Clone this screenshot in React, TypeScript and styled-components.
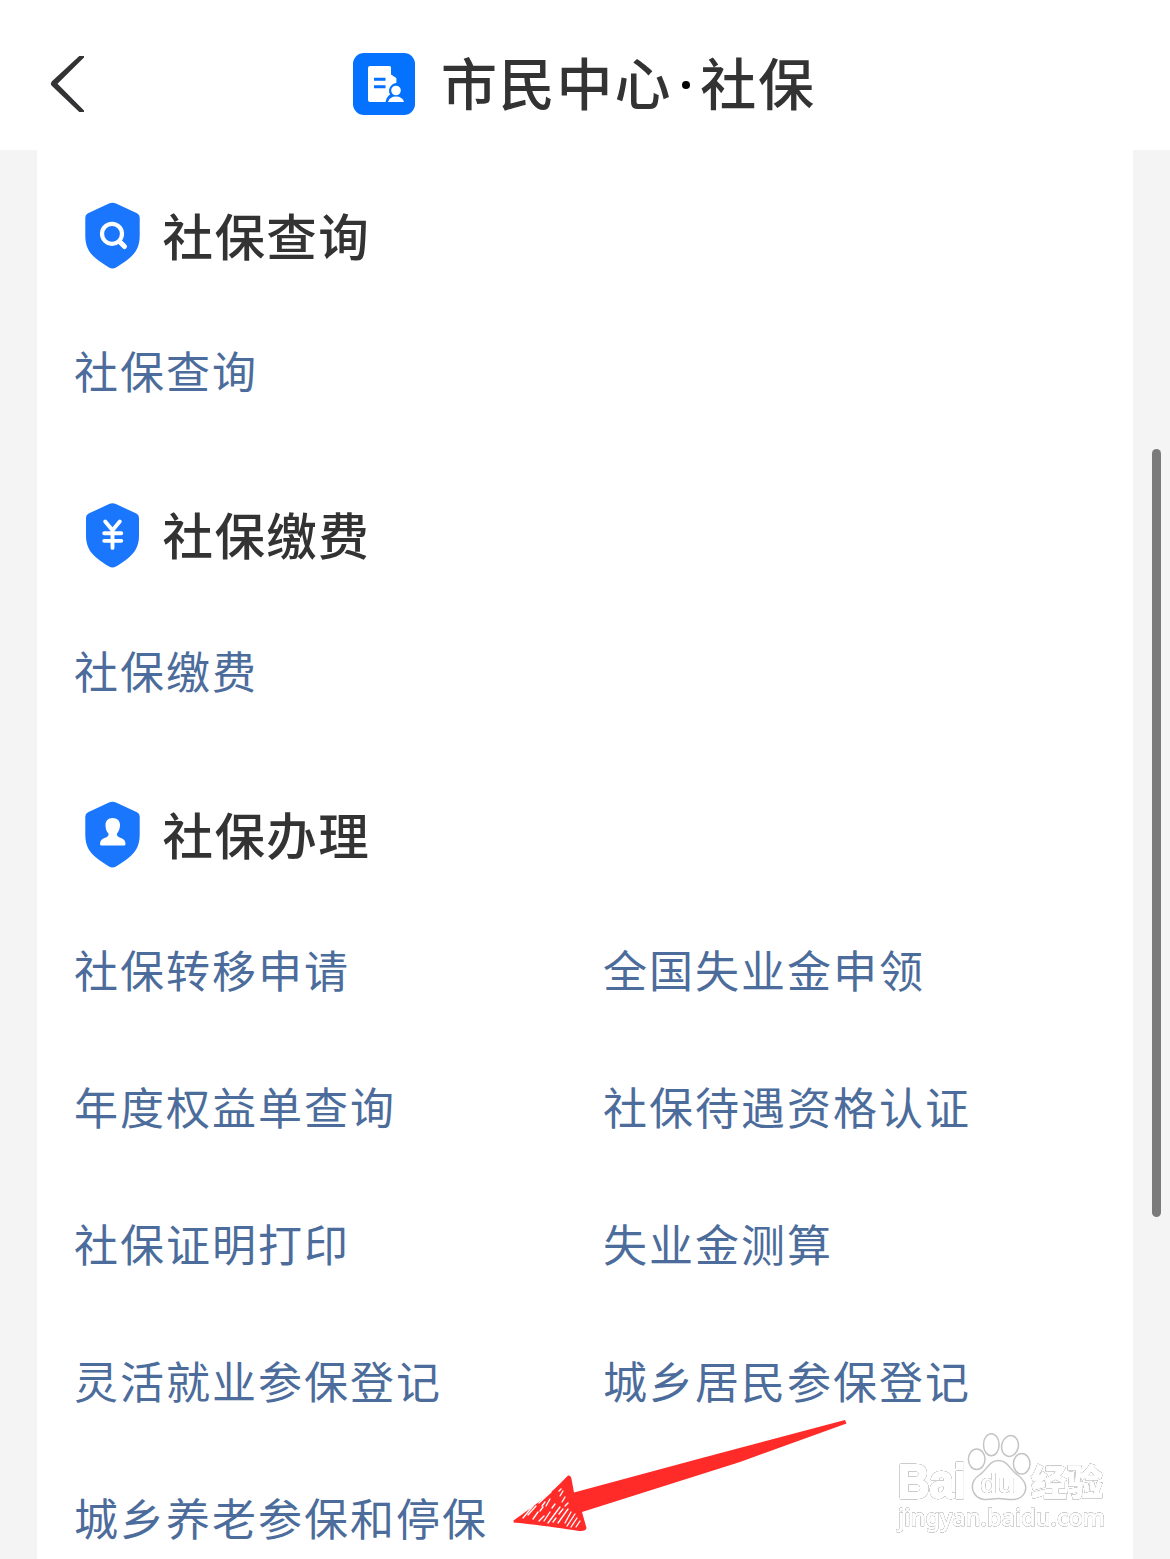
import React from "react";
import styled, { createGlobalStyle } from "styled-components";

const Global = createGlobalStyle`
  * { box-sizing: border-box; }
  body {
    margin: 0;
    background: #fff;
    font-family: "Noto Sans CJK SC", "Noto Sans", sans-serif;
  }
`;

const Page = styled.div`
  position: relative;
  display: flex;
  flex-direction: column;
  width: 1170px;
  height: 1559px;
  overflow: hidden;
  background: #f4f4f4;
`;

const Header = styled.header`
  display: grid;
  grid-template-columns: 353px 1fr;
  align-items: center;
  height: 150px;
  flex: none;
  padding-bottom: 16px;
  background: #fff;
`;

const BackButton = styled.button`
  display: flex;
  width: 100px;
  height: 60px;
  margin-top: 34px;
  padding: 0 0 0 50px;
  align-items: center;
  border: 0;
  background: none;

  svg { flex: none; }
`;

const Brand = styled.div`
  display: flex;
  align-items: center;
  height: 62px;
  margin-top: 34px;
  gap: 26px;
`;

const Title = styled.h1`
  display: flex;
  margin: 0;
  padding-bottom: 6px;
  font-size: 56px;
  font-weight: 500;
  line-height: 62px;
  letter-spacing: 1.8px;
  color: #333;
`;

const Dot = styled.span`
  display: flex;
  width: 28px;
  align-items: center;
  justify-content: center;
  padding: 8px 0 0 0;

  &::before {
    content: "";
    width: 8px;
    height: 8px;
    border-radius: 50%;
    background: #000;
  }
`;

const Card = styled.main`
  flex: 1;
  min-height: 0;
  margin: 0 37px;
  padding: 18px 0 0 37px;
  background: #fff;
`;

const Section = styled.section`
  display: flex;
  flex-direction: column;
  height: 299.5px;
`;

const Heading = styled.h2`
  display: flex;
  flex: none;
  align-items: center;
  height: 136px;
  margin: 0;
  padding-left: 10px;
  gap: 21.5px;
  font-size: 50.5px;
  font-weight: 500;
  letter-spacing: 1.4px;
  line-height: 60px;
  color: #333;

  svg { flex: none; }
`;

const HeadingText = styled.span`
  padding-bottom: 5px;
`;

const Links = styled.div`
  display: grid;
  flex: none;
  grid-template-columns: 529px 1fr;
  grid-auto-rows: 137.1px;
`;

const Link = styled.a`
  display: flex;
  align-items: center;
  padding-bottom: 5px;
  font-size: 44px;
  letter-spacing: 2px;
  line-height: 60px;
  white-space: nowrap;
  color: #4c6c9b;
`;

const ScrollThumb = styled.div`
  position: absolute;
  left: 1152px;
  top: 449px;
  width: 9px;
  height: 768px;
  border-radius: 5px;
  background: #7b7b7b;
`;

const ArrowMark = styled.svg`
  position: absolute;
  left: 500px;
  top: 1400px;
`;

const Watermark = styled.svg`
  position: absolute;
  left: 870px;
  top: 1410px;
`;

const Outlined = styled.g<{ $weight: number }>`
  fill: #fff;
  stroke: #fff;
  stroke-width: ${(p) => p.$weight}px;
  stroke-linejoin: round;
  filter: drop-shadow(0 0 0.6px #888) drop-shadow(0 0 0.6px #999);
`;

type Kind = "search" | "yen" | "person";

const Shield = ({ kind }: { kind: Kind }) => (
  <svg width="57" height="68" viewBox={kind === "yen" ? "-0.6 -0.6 58.2 69.8" : "0 0 57 68"}>
    <path
      fill="#1976fd"
      d="M25 1.500Q28.500 0 32 1.500L53 11.300Q55.700 12.800 55.700 15.500V34C55.700 44 52 51 45 56.500C41 59.800 36 63.200 32 65.500Q28.500 67.700 25 65.500C21 63.200 16 59.800 12 56.500C5 51 1.300 44 1.300 34V15.500Q1.300 12.800 4 11.300Z"
    />
    {kind === "search" && (
      <g fill="none" stroke="#fff" strokeWidth="4.200" strokeLinecap="round">
        <circle cx="28" cy="31.800" r="10" />
        <path d="M35.500 39.500L40.500 44.500" strokeWidth="5" />
      </g>
    )}
    {kind === "yen" && (
      <path
        d="M21 19.500L28.500 28.500L36 19.500M28.500 28.500V46.500M20 31.500H37.500M20 39.300H37.500"
        fill="none"
        stroke="#fff"
        strokeWidth="4"
        strokeLinecap="round"
        strokeLinejoin="round"
      />
    )}
    {kind === "person" && (
      <path
        fill="#fff"
        d="M28.500 17C33.500 17 36 20 36 24C36 28 34.500 30.500 33 32.500C32.500 35 34 36 37 37C40 38 41.500 40 41.500 43Q41.500 44.500 40 44.500H17.500Q16 44.500 16 43C16 40 17.500 38 20.500 37C23.500 36 25 35 24.500 32.500C22.500 30.500 21.500 28 21.500 24C21.500 20 24 17 28.500 17Z"
      />
    )}
  </svg>
);

const sections: { title: string; kind: Kind; links: string[] }[] = [
  { title: "社保查询", kind: "search", links: ["社保查询"] },
  { title: "社保缴费", kind: "yen", links: ["社保缴费"] },
  {
    title: "社保办理",
    kind: "person",
    links: [
      "社保转移申请",
      "全国失业金申领",
      "年度权益单查询",
      "社保待遇资格认证",
      "社保证明打印",
      "失业金测算",
      "灵活就业参保登记",
      "城乡居民参保登记",
      "城乡养老参保和停保",
    ],
  },
];

const App = () => (
  <>
    <Global />
    <Page>
      <Header>
        <BackButton aria-label="返回">
          <svg width="36" height="58" viewBox="0 0 36 58">
            <path d="M29.300 1H34V2.500L7.500 28.700L34 55.500V57H29.300L1.700 30.700Q0 28.700 1.700 26.600Z" fill="#333335" />
          </svg>
        </BackButton>
        <Brand>
          <svg width="62" height="62" viewBox="0 0 62 62">
            <rect width="62" height="62" rx="11" fill="#0571ff" />
            <path d="M17 13H36.500Q38 13 38 14.500V21.500L43.300 25Q43.700 27 43.300 30C37 31 34.500 37 37 41.500C34.500 43 33 46 32.500 49H17Q15 49 15 47V15Q15 13 17 13Z" fill="#fff" />
            <path d="M21 26.300H32.500M21 33.700H32.500" stroke="#0571ff" strokeWidth="3" />
            <circle cx="43" cy="37.500" r="4.800" fill="#fff" />
            <path d="M35 49Q36.500 43.500 43 43.500T51 49Z" fill="#fff" />
          </svg>
          <Title>
            市民中心<Dot />社保
          </Title>
        </Brand>
      </Header>
      <Card>
        {sections.map((s) => (
          <Section key={s.title}>
            <Heading>
              <Shield kind={s.kind} />
              <HeadingText>{s.title}</HeadingText>
            </Heading>
            <Links>
              {s.links.map((l) => (
                <Link key={l}>{l}</Link>
              ))}
            </Links>
          </Section>
        ))}
      </Card>
      <ScrollThumb />
      <ArrowMark width="370" height="159" viewBox="0 0 370 159">
        <path
          fill="#fe2b28"
          d="M345 20L346.500 23.500L240 62L82 112L86.500 128Q86 131.500 79 131C60 128 40 125 13.500 122.500V120.500C30 109 50 95 68 75.500Q71 75 71.500 79L74 92.500L200 58.500Z"
        />
        <g stroke="#fff" strokeWidth="1.300" strokeLinecap="round">
          <path d="M23 118L33 106M28 115L36 106M39 103L51 92M33 119L38 112M42 106L45 102M39 121L44 116M44 121L50 112M48 123L60 107M53 122L56 118M59 114L63 109M58 123L68 109M65 123L71 112M67 126L75 114M71 127L77 118M76 127L80 121M59 91L61 89M60 96L63 91M62 102L65 97M46 106L50 99M40 111L43 107M52 108L55 104M65 106L68 103" />
        </g>
      </ArrowMark>
      <Watermark width="250" height="130" viewBox="0 0 250 130">
        <g fill="#fff" stroke="#c4c4c4" strokeWidth="1.500">
          <ellipse cx="106.700" cy="49.300" rx="8.300" ry="10.300" />
          <ellipse cx="121.300" cy="34.700" rx="7.800" ry="11" />
          <ellipse cx="140" cy="36" rx="8.300" ry="10.500" transform="rotate(12 140 36)" />
          <ellipse cx="151.700" cy="53.800" rx="8.300" ry="10.300" />
          <path d="M128.500 50.500C138 50.500 140 60 147 64.500C155 70 157.500 77 154.500 83C149 93 136 88.500 128.500 88.500S110 93 104 83C101 77 102 70 110 64.500C117 60 119 50.500 128.500 50.500Z" />
        </g>
        <Outlined $weight={2.4} fontWeight="700" fontFamily='"Liberation Sans", sans-serif'>
          <text x="28" y="88" fontSize="48" textLength="68" lengthAdjust="spacingAndGlyphs">Bai</text>
        </Outlined>
        <Outlined $weight={0.1} fontWeight="700" fontFamily='"Liberation Sans", sans-serif'>
          <text x="110" y="83" fontSize="27" textLength="35" lengthAdjust="spacingAndGlyphs">du</text>
        </Outlined>
        <Outlined $weight={1} fontWeight="900" fontFamily='"Noto Sans CJK SC", sans-serif'>
          <text x="161" y="86" fontSize="36" textLength="72" lengthAdjust="spacingAndGlyphs">经验</text>
        </Outlined>
        <Outlined $weight={0.8} fontWeight="500" fontFamily='"Noto Sans", sans-serif'>
          <text x="28" y="116" fontSize="23.500" textLength="207" lengthAdjust="spacingAndGlyphs">jingyan.baidu.com</text>
        </Outlined>
      </Watermark>
    </Page>
  </>
);

export default App;
